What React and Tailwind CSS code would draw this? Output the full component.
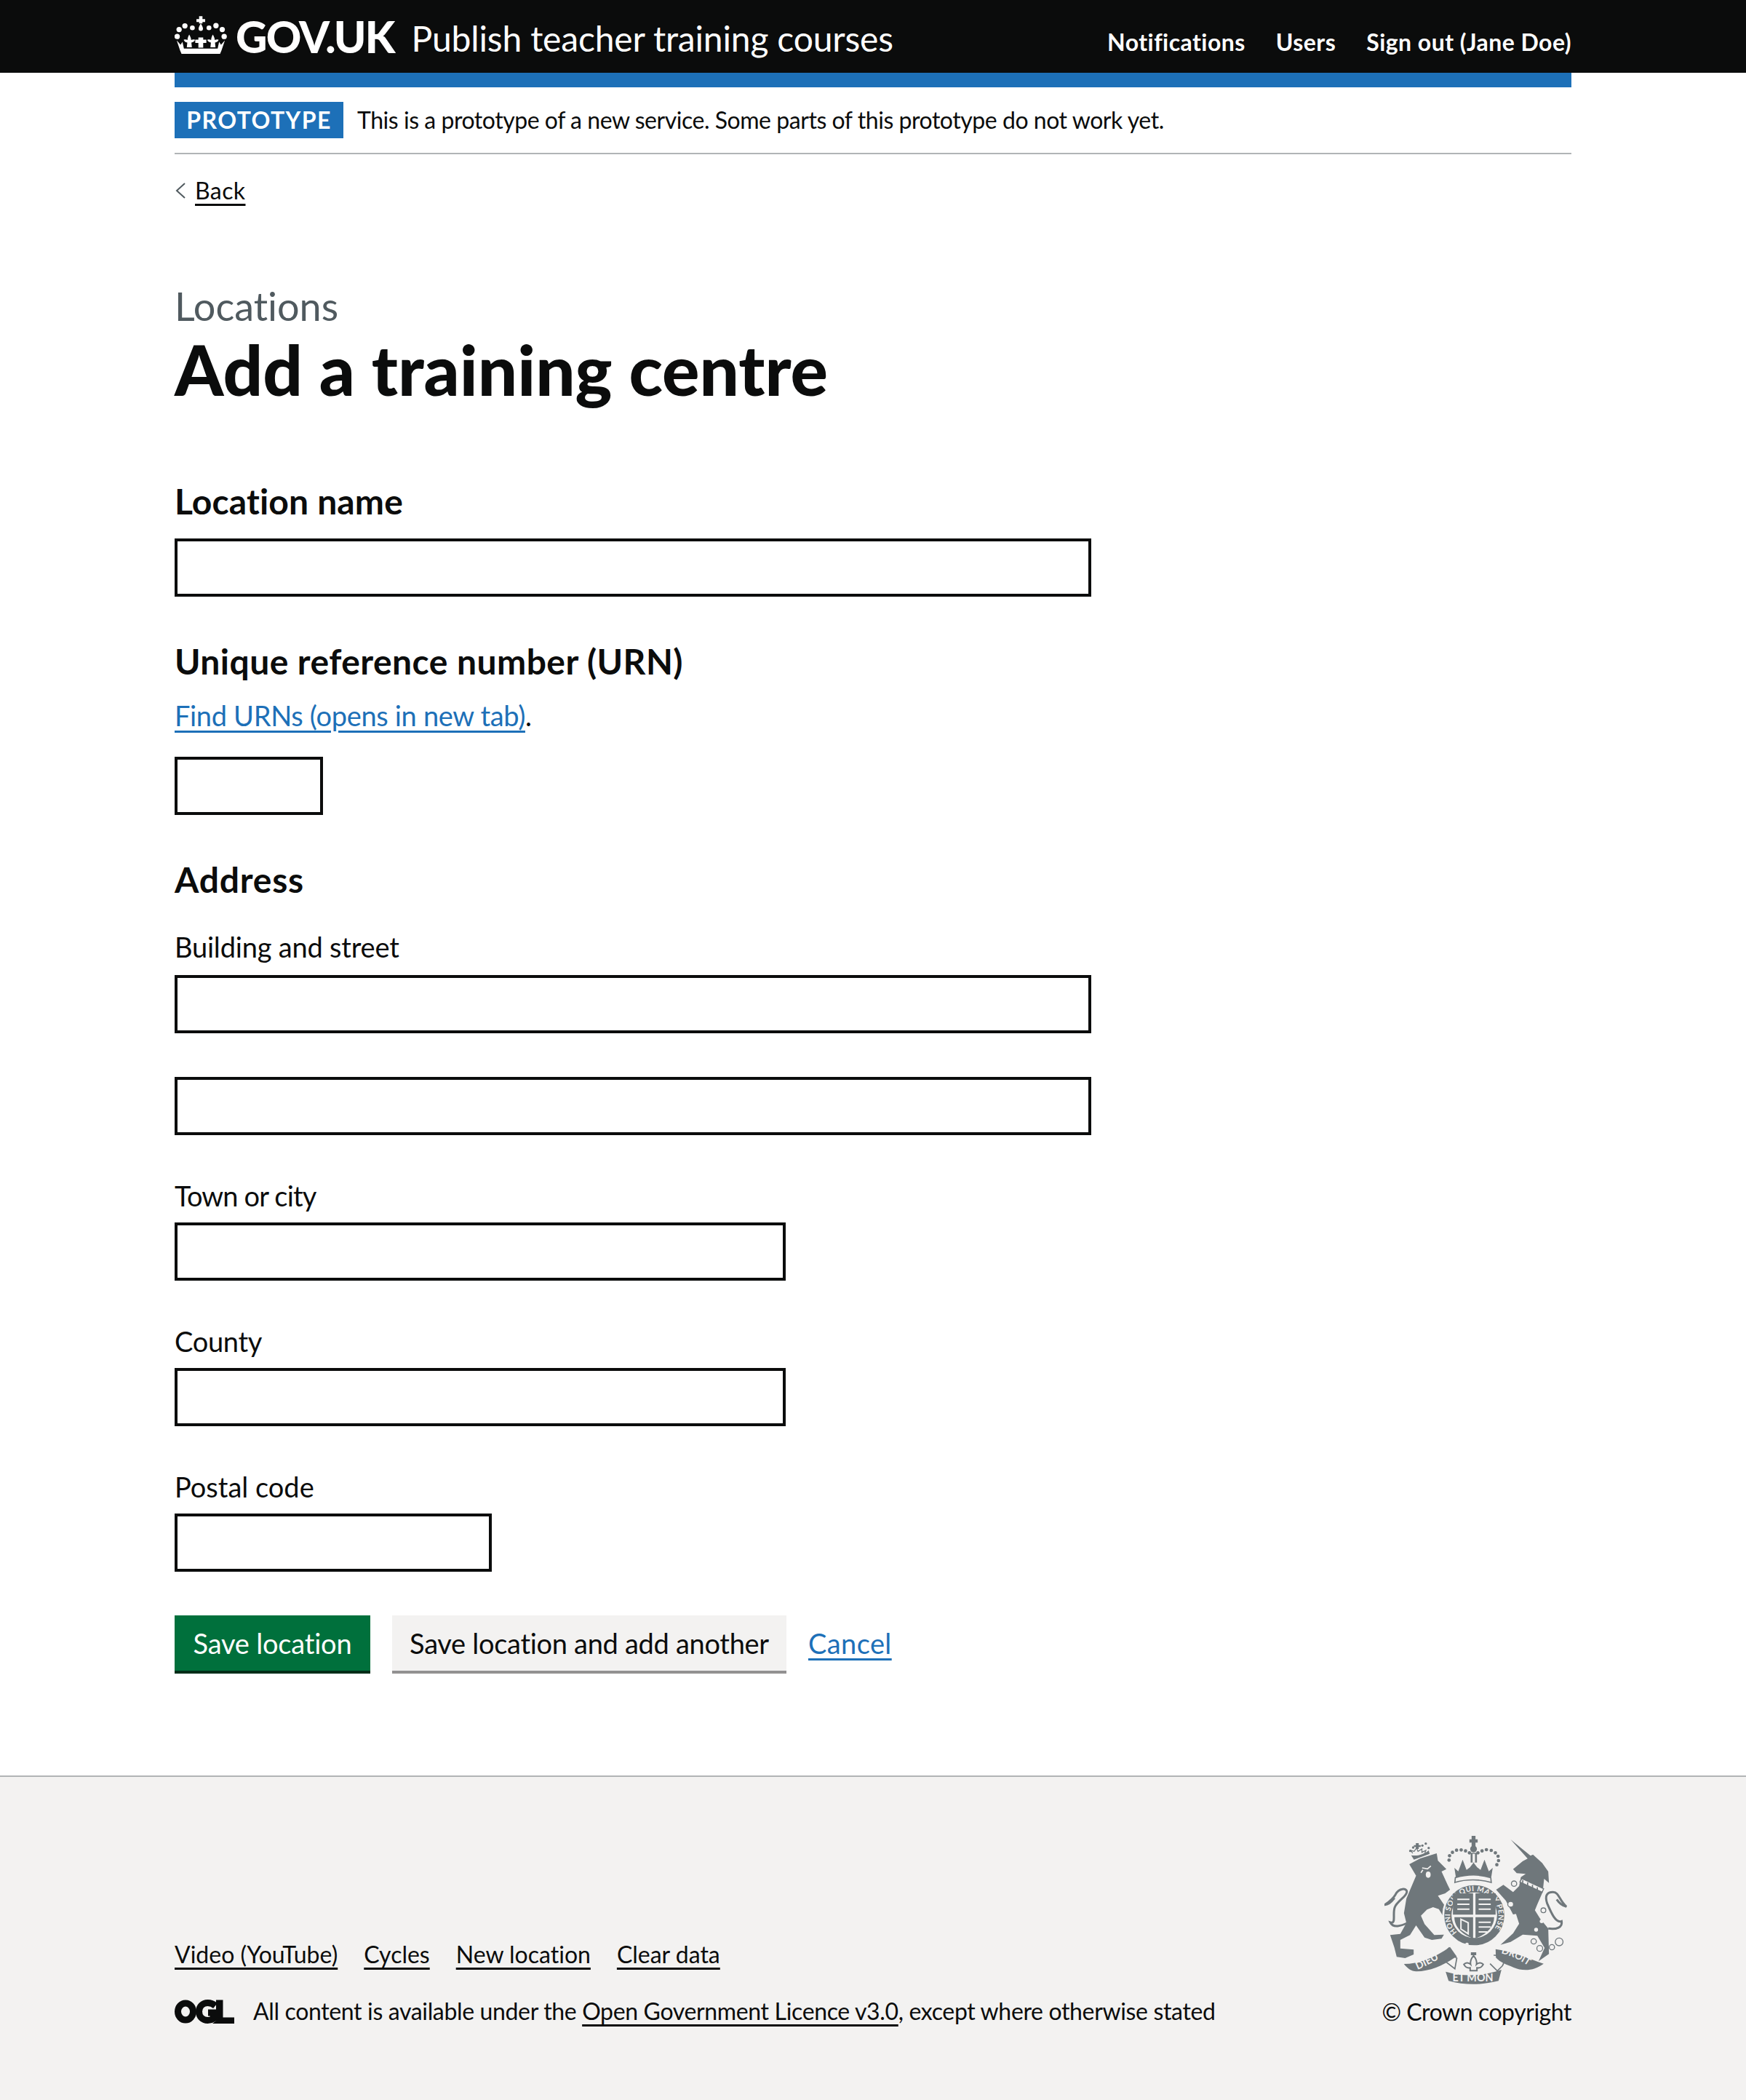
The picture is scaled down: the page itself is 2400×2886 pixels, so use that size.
const SANS = "font-['Lato',sans-serif]";
const LINK = "underline decoration-[3px] underline-offset-[6px]";

function CrownLogo() {
    return (
        <svg viewBox="0 0 216 160" className="w-[72px] h-[53px] mb-[6px] fill-white shrink-0">
            {/* cross and pearl */}
            <path d="M101 4h14v12h11v12h-11v6h-14v-6H90V16h11z" />
            <path d="M108 34c6 10 9 16 9 22a9 9 0 0 1-18 0c0-6 3-12 9-22z" />
            <circle cx="42" cy="44" r="11" />
            <circle cx="73" cy="52" r="10" />
            <circle cx="142" cy="52" r="10" />
            <circle cx="171" cy="43" r="11" />
            <circle cx="18" cy="59" r="11" />
            <circle cx="197" cy="59" r="11" />
            <circle cx="10" cy="88" r="11" />
            <circle cx="205" cy="88" r="11" />
            {/* band with fleurs */}
            <path d="M60 80c5 9 8 15 8 23 5-3 11-3 16-1-2 6-8 11-15 11l2 20H50l2-20c-7 0-13-5-15-11 5-2 11-2 16 1 0-8 2-14 7-23z" />
            <path d="M158 80c5 9 8 15 8 23 5-3 11-3 16-1-2 6-8 11-15 11l2 20h-21l2-20c-7 0-13-5-15-11 5-2 11-2 16 1 0-8 2-14 7-23z" />
            <path d="M98 92h20v9h13v14h-13v19H98v-19H85v-14h13z" />
            <path d="M8 104l16 18 8-12 6 28h140l6-28 8 12 16-18-14 42-6 14H28l-6-14z" />
        </svg>
    );
}

function Chevron() {
    return (
        <svg viewBox="0 0 16 22" className="w-[16px] h-[22px] fill-none stroke-[#505a5f] stroke-2 shrink-0">
            <path d="M14 1L3 11l11 10" />
        </svg>
    );
}

function OglLogo() {
    return (
        <svg viewBox="0 0 82 33" className="w-[82px] h-[33px] shrink-0 text-[#0b0c0c]">
            <ellipse cx="15" cy="16.5" rx="10.5" ry="11.5" className="fill-none stroke-current stroke-[9]" />
            <path d="M56 8.500C52.500 5.500 49 4.500 45.500 4.500 38.500 4.500 33.500 9.500 33.500 16.500S38.500 28.500 45.500 28.500C48.500 28.500 51 27.800 53 26.500V18H46" className="fill-none stroke-current stroke-[9]" />
            <path d="M57 0.500h9.500v24H82V33H52l5-4z" className="fill-current" />
        </svg>
    );
}

// Royal coat of arms, coordinates taken from the zoomed reference
function Crest() {
    const c = "#6f777b";
    const bg = "#f3f2f1";
    const crownDots = [[336, 168], [338, 150], [350, 136], [367, 127], [386, 126], [404, 130], [420, 138], [455, 138], [472, 130], [490, 125], [510, 128], [527, 138], [538, 152], [540, 170], [533, 187]];
    const lionDots = [[176, 130], [188, 116], [226, 108], [240, 100], [252, 118]];
    const type = { fontFamily: "Lato, sans-serif", fontWeight: 700, fill: bg };
    return (
        <svg viewBox="70 65 755 615" className="w-[252px] h-[205px] mr-[5px] shrink-0" fill={c}>
            {/* lion */}
            <path d="M172 185l45-24 68-21 5 30 35 35-20 10 25 55 10 20-20 15-30 10 48 70 4 30-18 5-30-50-24-8-25 10-25 25 15 35 40 45 40-2-10 17-40 5-30-10-35-50-25 40-40 20 0 35 55 5 0 20-35 15-35-5-10-40-17-50 42-5 25-45-10-40 10-60 40-95z" />
            <path d="M168 425c-30 15-62 25-74 0 25 8 8-35 18-62 8-25 50-45 50-65 0-14-32-18-47 12-10 18-26 30-44 42 18 0 30-15 40-28" fill="none" stroke={c} strokeWidth="9" />
            <ellipse cx="250" cy="228" rx="10" ry="13" fill={bg} />
            <path d="M225 200l22 4 14-12M228 208l-8 12" fill="none" stroke={bg} strokeWidth="5" />
            <path d="M180 148c25 4 50-2 72-20l4 14-65 24z" />
            <path d="M186 140l-8-12 14 4 10-14 6 14 16-10 0 14 16-8-4 12" fill="none" stroke={c} strokeWidth="4" />
            {lionDots.map(([x, y]) => <circle key={x} cx={x} cy={y} r="5" />)}
            <path d="M199 98h12v8h8v8h-8v8h-12v-8h-8v-8h8z" />
            {/* unicorn */}
            <path d="M590 83L672 150 682 145 720 180 745 215 748 262 728 245 722 300 700 350 690 375 712 410 745 450 748 555 705 585 730 530 700 480 640 475 590 505 548 517 600 470 625 430 612 390 600 392 570 335 530 290 560 270 600 300 625 275 632 238 652 225 615 222 600 205 640 172 660 162z" />
            <path d="M745 450c35 5 60-5 55-30-25 10-45-40-60-75-8-25-5-45 25-45 25 0 25 35 55 60-20-5-30-15-40-30" fill="none" stroke={c} strokeWidth="9" />
            <path d="M628 258l92 42 6-14-90-42z" fill={bg} stroke={c} strokeWidth="4" />
            <path d="M640 262v-12M660 272v-12M680 282v-12M700 292v-12" stroke={c} strokeWidth="5" />
            <circle cx="604" cy="265" r="11" fill={bg} stroke={c} strokeWidth="4" />
            <circle cx="590" cy="350" r="12" fill={bg} stroke={c} strokeWidth="4" />
            <circle cx="725" cy="375" r="10" fill={bg} stroke={c} strokeWidth="4" />
            <circle cx="695" cy="455" r="8" fill={bg} />
            <circle cx="718" cy="420" r="8" fill={bg} />
            <circle cx="685" cy="503" r="11" fill="none" stroke={c} strokeWidth="4" />
            <circle cx="710" cy="532" r="12" fill="none" stroke={c} strokeWidth="4" />
            <circle cx="760" cy="527" r="11" fill="none" stroke={c} strokeWidth="4" />
            <circle cx="790" cy="505" r="16" fill="none" stroke={c} strokeWidth="4" />
            {/* royal crown */}
            <path d="M429 68h16v14h9v14h-9v14h-16V96h-9V82h9z" />
            <circle cx="437" cy="122" r="14" />
            <path d="M425 138h26v40h-26z" />
            <path d="M433 142h10v36h-10z" fill={bg} />
            {crownDots.map(([x, y]) => <circle key={x} cx={x} cy={y} r="7" />)}
            <path d="M358 200l16 14 18-48 16 42 14-10 15-20 15 20 14 10 16-42 18 48 16-14-6 38H364z" />
            <path d="M362 240c50-14 100-14 146 0l2 20c-45-14-105-14-150 0z" fill={bg} stroke={c} strokeWidth="5" />
            {/* garter with shield */}
            <circle cx="440" cy="395" r="128" stroke={bg} strokeWidth="8" />
            <defs>
                <path id="garterRing" d="M369 466A100 100 0 1 1 511 466" />
                <path id="ribbonLeft" d="M205 620Q260 596 325 558" />
                <path id="ribbonRight" d="M550 552Q610 565 680 615" />
            </defs>
            <text {...type} fontSize="30" letterSpacing="1.5">
                <textPath href="#garterRing">HONI SOIT QUI MAL Y PENSE</textPath>
            </text>
            <circle cx="440" cy="395" r="94" fill={bg} />
            <path d="M352 305h83v88h-83zM445 305h83v88h-83zM358 403h77v88c-40-15-77-45-77-88zM445 403h77c0 43-37 73-77 88z" />
            <path d="M385 412l30 14v46l-30-20zM370 330h50M370 350h50M370 370h50M458 330h50M458 350h50M458 370h50M458 424h50M458 444h50M458 464h36" fill="none" stroke={bg} strokeWidth="6" />
            <circle cx="410" cy="515" r="7" fill={bg} />
            <circle cx="448" cy="528" r="7" fill={bg} />
            {/* motto */}
            <path d="M150 596c60 0 125-25 190-70l28 40-12 6c-45 30-100 55-155 55-20 0-40-15-51-31z" />
            <path d="M338 528c-25 20-32 45-14 60l36 28 8-44-14-10" fill="none" stroke={c} strokeWidth="5" />
            <path d="M322 628c70 20 150 20 230-8l-12 46c-70 18-140 18-206 0z" />
            <path d="M528 535c70 10 135 38 198 60-40 30-85 32-125 15-25-10-55-20-72-40z" />
            <path d="M520 560c35 0 50 25 35 45l-20 20-30-30" fill="none" stroke={c} strokeWidth="5" />
            <text {...type} fontSize="42">
                <textPath href="#ribbonLeft" startOffset="1%">DIEU</textPath>
            </text>
            <text {...type} x="350" y="668" fontSize="43">ET MON</text>
            <text {...type} fontSize="40">
                <textPath href="#ribbonRight">DROIT</textPath>
            </text>
            {/* fleur below shield */}
            <path d="M437 562c10 12 15 22 12 36 8-8 20-10 28 0-5 10-14 16-26 14v12h-28v-12c-12 2-21-4-26-14 8-10 20-8 28 0-3-14 2-24 12-36z" fill="none" stroke={c} strokeWidth="6" />
            <path d="M426 548h22v12h-22z" />
        </svg>
    );
}

function Label({ children, className }) {
    return <label className={`block text-[38px] leading-[46px] h-[50px] text-[#0b0c0c] ${className}`}>{children}</label>;
}

function Heading({ children, className }) {
    return <h2 className={`text-[48px] leading-[50px] font-bold text-[#0b0c0c] ${className}`}>{children}</h2>;
}

function Field({ className }) {
    return <input type="text" className={`block h-[80px] border-4 border-[#0b0c0c] bg-white ${className}`} />;
}

export default function App() {
    return (
        <div className={`${SANS} bg-white text-[#0b0c0c] w-[2400px] [font-variant-ligatures:none]`}>
            <header className="bg-[#0b0c0c] h-[100px] px-[240px] flex items-center justify-between text-white">
                <div className="flex items-center">
                    <CrownLogo />
                    <span className="ml-[12px] text-[60px] leading-[70px] font-black tracking-[-1.8px]">GOV.UK</span>
                    <span className="ml-[24px] pt-[6px] text-[48px] leading-[60px] tracking-[-0.17px]">Publish teacher training courses</span>
                </div>
                <nav className="flex gap-[42px] text-[32px] leading-[40px] font-bold tracking-[0.45px] pt-[16px]">
                    <a>Notifications</a>
                    <a>Users</a>
                    <a>Sign out (Jane Doe)</a>
                </nav>
            </header>

            <div className="mx-[240px]">
                <div className="h-[20px] bg-[#1d70b8]" />
                <div className="py-[20px] border-b-2 border-[#b1b4b6] flex items-center">
                    <strong className="h-[50px] w-[232px] bg-[#1d70b8] text-white text-[32px] leading-[50px] font-bold tracking-[1.4px] text-center">PROTOTYPE</strong>
                    <span className="ml-[19px] text-[32px] leading-[50px] tracking-[-0.46px]">This is a prototype of a new service. Some parts of this prototype do not work yet.</span>
                </div>

                <a className="mt-[30px] flex items-center gap-[12px] h-[40px] text-[32px] leading-[40px] tracking-[0.4px]">
                    <Chevron />
                    <span className={LINK}>Back</span>
                </a>

                <p className="mt-[109px] text-[54px] leading-[60px] text-[#505a5f]">Locations</p>
                <h1 className="mt-[6px] text-[96px] leading-[100px] font-black">Add a training centre</h1>

                <form>
                    <Heading className="mt-[107px] mb-[26px] tracking-[0.15px]">Location name</Heading>
                    <Field className="w-[1260px]" />

                    <Heading className="mt-[64px] tracking-[0.45px]">Unique reference number (URN)</Heading>
                    <p className="mt-[26px] text-[38px] leading-[46px] h-[50px] tracking-[-0.33px]">
                        <a className={`text-[#1d70b8] ${LINK}`}>Find URNs (opens in new tab)</a>.
                    </p>
                    <Field className="mt-[30px] w-[204px]" />

                    <Heading className="mt-[64px] tracking-[0.8px]">Address</Heading>
                    <Label className="mt-[44px] mb-[12px] tracking-[-0.2px]">Building and street</Label>
                    <Field className="w-[1260px]" />
                    <Field className="mt-[60px] w-[1260px]" />

                    <Label className="mt-[60px] mb-[10px] tracking-[-0.85px]">Town or city</Label>
                    <Field className="w-[840px]" />

                    <Label className="mt-[60px] mb-[10px] tracking-[-0.3px]">County</Label>
                    <Field className="w-[840px]" />

                    <Label className="mt-[60px] mb-[10px]">Postal code</Label>
                    <Field className="w-[436px]" />

                    <div className="mt-[60px] flex items-start gap-[30px]">
                        <button type="button" className="h-[80px] w-[269px] bg-[#00703c] text-white text-[38px] leading-[72px] whitespace-nowrap tracking-[-0.2px] pb-[4px] shadow-[inset_0_-4px_0_#002d18]">Save location</button>
                        <button type="button" className="h-[80px] w-[542px] bg-[#f3f2f1] text-[38px] leading-[72px] whitespace-nowrap tracking-[-0.3px] pb-[4px] shadow-[inset_0_-4px_0_#929191]">Save location and add another</button>
                        <a className={`text-[38px] leading-[76px] text-[#1d70b8] tracking-[0.4px] ${LINK}`}>Cancel</a>
                    </div>
                </form>
            </div>

            <footer className="mt-[140px] h-[446px] bg-[#f3f2f1] border-t-2 border-[#b1b4b6] px-[240px] pt-[80px] flex justify-between">
                <div className="pt-[144px]">
                    <ul className="flex gap-[36px] text-[32px] leading-[40px]">
                        <li><a className={LINK}>Video (YouTube)</a></li>
                        <li><a className={LINK}>Cycles</a></li>
                        <li><a className={LINK}>New location</a></li>
                        <li><a className={LINK}>Clear data</a></li>
                    </ul>
                    <div className="mt-[38px] flex items-center gap-[26px] text-[32px] leading-[40px] tracking-[-0.35px]">
                        <OglLogo />
                        <span>All content is available under the <a className={LINK}>Open Government Licence v3.0</a>, except where otherwise stated</span>
                    </div>
                </div>
                <div className="flex flex-col items-end">
                    <Crest />
                    <a className="mt-[18px] text-[32px] leading-[40px] tracking-[-0.46px]">© Crown copyright</a>
                </div>
            </footer>
        </div>
    );
}
